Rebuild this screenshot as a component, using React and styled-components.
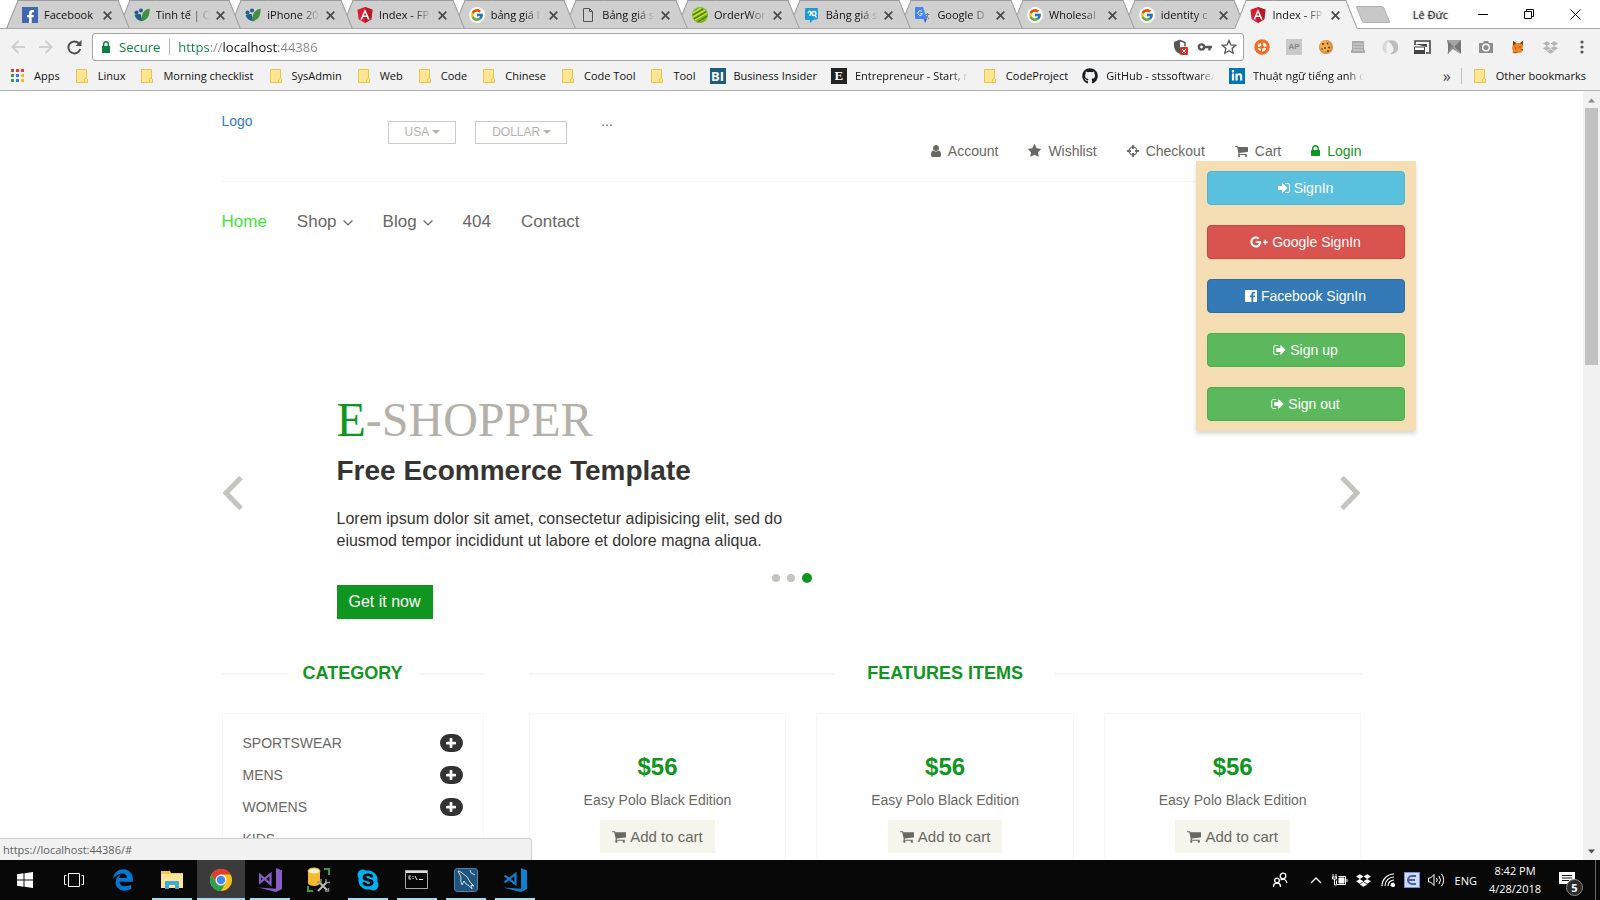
import React from "react";
import styled, { createGlobalStyle, css } from "styled-components";
import {
  FaDropbox,
  FaEdgeLegacy,
  FaFacebookF,
  FaGithub,
  FaGooglePlusG,
  FaLinkedinIn,
  FaSkype,
} from "react-icons/fa";
import { FcGoogle } from "react-icons/fc";

const ui = `"Open Sans", "Noto Sans", sans-serif`;
const arial = `"Liberation Sans", Arial, sans-serif`;
const green = "#0f9620";
const ink = "#696763";

const GlobalStyle = createGlobalStyle`
  *, *::before, *::after { box-sizing: border-box; }
  body { margin: 0; background: #fff; font-family: ${arial}; }
  button { margin: 0; padding: 0; border: 0; background: none; font: inherit; color: inherit; cursor: pointer; }
  a { color: inherit; text-decoration: none; }
  h1, h2, h3, p, ul { margin: 0; padding: 0; }
  ul { list-style: none; }
  svg { display: block; flex: none; }
`;

/* ---------- Browser window ---------- */

const Window = styled.div`
  display: flex;
  flex-direction: column;
  height: 100vh;
  overflow: hidden;
`;

const TabStrip = styled.div`
  display: flex;
  height: 28px;
  padding-left: 6px;
  background: #fff;
  font-family: ${ui};
  font-size: 11px;
`;

const Tabs = styled.div`
  display: flex;
  flex: 1;
  min-width: 0;
  position: relative;
  z-index: 1;
`;

const tabFace = css`
  content: "";
  position: absolute;
  top: 0;
  bottom: ${(p) => (p.$active ? "-1px" : "0")};
  z-index: -1;
  background: ${(p) => (p.$active ? "#f2f2f2" : "#cfcfcf")};
  border: 0 solid #9b9b9b;
  border-top-width: 1px;
`;

const Tab = styled.button`
  position: relative;
  isolation: isolate;
  z-index: ${(p) => p.$z};
  flex: 1;
  min-width: 0;
  display: flex;
  align-items: center;
  gap: 6px;
  padding: 2px 3px 0 16px;
  text-align: left;
  color: #111;

  &::before {
    ${tabFace}
    left: 6px;
    right: 40%;
    border-left-width: 1px;
    transform: skewX(-22deg);
  }
  &::after {
    ${tabFace}
    left: 40%;
    right: -6px;
    border-right-width: 1px;
    transform: skewX(22deg);
  }
`;

const TabTitle = styled.span`
  flex: 1;
  white-space: nowrap;
  line-height: 18px;
  ${(p) => p.$fade && "mask-image: linear-gradient(to right, #000 64%, transparent 100%);"}
`;

const TabClose = styled.span`
  width: 12px;
  display: flex;
`;

const WindowTools = styled.div`
  width: 254px;
  flex: none;
  display: flex;
  align-items: center;
  justify-content: flex-end;
  padding-right: 18px;
`;

const NewTab = styled.button`
  width: 28px;
  height: 17px;
  margin-right: auto;
  margin-left: 13px;
  border: 1px solid #b0b0b0;
  border-radius: 2px;
  background: #c8c8c8;
  transform: skewX(22deg);
`;

const Profile = styled.button`
  color: #333;
  margin-right: 28px;
  text-shadow: 0 0 2px #777;
`;

const WindowButton = styled.button`
  width: 14px;
  height: 20px;
  margin-left: ${(p) => (p.$gap ? "32px" : "0")};
  display: grid;
  place-items: center;
`;

const Toolbar = styled.div`
  display: flex;
  align-items: center;
  height: 35px;
  padding: 2px 10px 0 10px;
  background: #f2f2f2;
  border-top: 1px solid #a9a9a9;
  font-family: ${ui};
`;

const NavButton = styled.button`
  width: 16px;
  height: 28px;
  margin-right: 12px;
  display: grid;
  place-items: center;
`;

const Omnibox = styled.div`
  flex: 1;
  min-width: 0;
  height: 28px;
  margin-right: 10px;
  margin-left: -2px;
  display: flex;
  align-items: center;
  padding: 0 6px 0 9px;
  background: #fff;
  border: 1px solid #a6a6a6;
  border-radius: 3px;
  font-size: 13px;
`;

const Secure = styled.span`
  margin-left: 9px;
  padding-right: 9px;
  color: #0b8043;
  line-height: 16px;
  border-right: 1px solid #b5b5b5;
`;

const Address = styled.input`
  flex: 1;
  min-width: 0;
  height: 22px;
  padding: 0 0 0 8px;
  border: 0;
  outline: 0;
  font: 13px ${ui};
  color: #777;
  background: linear-gradient(to right, #0b8043 39px, #888 39px, #888 53px, #111 53px, #111 107px, #888 107px);
  background-clip: text;
  -webkit-text-fill-color: transparent;
`;

const OmniTools = styled.div`
  display: flex;
  gap: 8px;
`;

const Extensions = styled.div`
  display: flex;
  gap: 16px;
`;

const ToolButton = styled.button`
  width: 16px;
  height: 16px;
  display: grid;
  place-items: center;
`;

const ApBadge = styled.span`
  width: 16px;
  height: 16px;
  background: #c9c9c9;
  color: #888;
  font: bold 8px/16px ${arial};
`;

const BookmarkBar = styled.nav`
  display: flex;
  align-items: center;
  height: 28px;
  padding: 0 14px 2px 10px;
  background: #f2f2f2;
  border-bottom: 1px solid #b2b2b2;
  font-family: ${ui};
  font-size: 11px;
  color: #111;
`;

const Bookmark = styled.a`
  display: flex;
  align-items: center;
  gap: 8px;
  flex: none;
  margin-right: ${(p) => (p.$last ? 0 : 14)}px;
`;

const BookmarkText = styled.span`
  white-space: nowrap;
  line-height: 18px;
  ${(p) => p.$fade && "mask-image: linear-gradient(to right, #000 85%, transparent 100%);"}
`;

const BookmarkEnd = styled.div`
  display: flex;
  align-items: center;
  margin-left: auto;
  flex: none;
`;

const Overflow = styled.button`
  color: #444;
  font-size: 16px;
  line-height: 16px;
  padding-right: 10px;
  margin-right: 10px;
  border-right: 1px solid #c0c0c0;
`;

const LetterIcon = styled.span`
  width: 16px;
  height: 16px;
  flex: none;
  text-align: center;
  color: #fff;
  background: ${(p) => p.$bg};
  font: bold 13px/16px ${(p) => (p.$serif ? `"Liberation Serif", serif` : ui)};
`;

const IconTile = styled.span`
  width: 16px;
  height: 16px;
  flex: none;
  display: flex;
  align-items: ${(p) => (p.$low ? "flex-end" : "center")};
  justify-content: center;
  color: ${(p) => p.$fg || "#fff"};
  background: ${(p) => p.$bg || "transparent"};
  border-radius: ${(p) => (p.$round ? "50%" : "0")};
`;

/* ---------- Page frame ---------- */

const Viewport = styled.div`
  position: relative;
  flex: 1;
  min-height: 0;
  display: flex;
  overflow: hidden;
  background: #fff;
`;

const PageArea = styled.div`
  flex: 1;
  min-width: 0;
  overflow: hidden;
`;

const ScrollBar = styled.div`
  width: 17px;
  flex: none;
  display: flex;
  flex-direction: column;
  align-items: center;
  padding: 7px 0 6px;
  background: #f1f1f1;
`;

const ScrollThumb = styled.div`
  width: 13px;
  height: 34%;
  margin: 5px 0 auto;
  background: #c1c1c1;
`;

const StatusBubble = styled.div`
  position: absolute;
  left: 0;
  bottom: 0;
  width: 532px;
  height: 22px;
  padding-left: 3px;
  border: solid #cfcfcf;
  border-width: 1px 1px 0 0;
  border-radius: 0 4px 0 0;
  background: #f1f1f1;
  color: #5f5f5f;
  font: 11px/21px ${ui};
`;

/* ---------- Shop ---------- */

const Container = styled.div`
  max-width: 1140px;
  margin: 0 auto;
  color: ${ink};
  font-size: 14px;
  line-height: 20px;
`;

const ShopHeader = styled.header`
  display: flex;
  align-items: flex-start;
  height: 91px;
  padding-top: 20px;
  border-bottom: 1px solid #f5f5f5;
`;

const Logo = styled.a`
  width: 166px;
  color: #337ab7;
`;

const LocaleRow = styled.div`
  display: flex;
  gap: 19px;
  padding-top: 10px;
`;

const LocaleButton = styled.button`
  display: flex;
  align-items: center;
  gap: 3px;
  height: 23px;
  padding: 0 15px 2px 16px;
  border: 1px solid #ccccc6;
  color: #b4b1ab;
  font-size: 12px;
`;

const Caret = styled.span`
  border: 4px solid transparent;
  border-top-color: currentColor;
  border-bottom: 0;
`;

const Dots3 = styled.span`
  margin-left: 34px;
`;

const AccountNav = styled.ul`
  position: relative;
  display: flex;
  gap: 30px;
  margin-left: auto;
  padding-top: 30px;
`;

const AccountLink = styled.a`
  display: flex;
  align-items: center;
  gap: 7px;
  color: ${(p) => (p.$active ? green : ink)};
`;

const LoginMenu = styled.div`
  position: absolute;
  top: 50px;
  right: -54px;
  z-index: 2;
  width: 220px;
  padding: 10px 11px;
  display: flex;
  flex-direction: column;
  gap: 20px;
  background: #f5deb3;
  box-shadow: 0 3px 4px rgba(0, 0, 0, 0.15);
`;

const MenuButton = styled.button`
  display: flex;
  align-items: center;
  justify-content: center;
  gap: 4px;
  height: 34px;
  border: 1px solid ${(p) => p.$edge};
  border-radius: 4px;
  background: ${(p) => p.$bg};
  color: #fff;
`;

const MainNav = styled.nav`
  display: flex;
  gap: 30px;
  padding: 30px 0 19px;
  font-size: 17px;
`;

const MainLink = styled.a`
  display: flex;
  align-items: center;
  gap: 6px;
  color: ${(p) => (p.$active ? "#43e539" : ink)};
`;

const Carousel = styled.section`
  position: relative;
  display: flex;
  align-items: center;
  margin-top: 116px;
  height: 252px;
`;

const Arrow = styled.button`
  width: 22px;
  color: #c4c4be;
`;

const Caption = styled.div`
  flex: 1;
  align-self: flex-end;
  padding-left: 93px;
  color: #363432;
`;

const Brand = styled.h1`
  font: 48px/53px "Liberation Serif", "Times New Roman", serif;
  color: #b4b1ab;
`;

const BrandInitial = styled.span`
  color: ${green};
`;

const Tagline = styled.h2`
  margin-top: 10px;
  font-size: 28px;
  line-height: 30px;
`;

const Lead = styled.p`
  max-width: 460px;
  margin-top: 22px;
  font-size: 16px;
  line-height: 22px;
`;

const GetButton = styled.button`
  display: block;
  margin-top: 33px;
  height: 34px;
  padding: 0 12px;
  background: ${green};
  color: #fff;
  font-size: 16px;
`;

const Indicators = styled.div`
  position: absolute;
  left: 0;
  right: 0;
  bottom: 36px;
  display: flex;
  align-items: center;
  justify-content: center;
  gap: 7px;
  height: 10px;
`;

const Indicator = styled.button`
  width: ${(p) => (p.$active ? 10 : 8)}px;
  height: ${(p) => (p.$active ? 10 : 8)}px;
  border-radius: 50%;
  background: ${(p) => (p.$active ? green : "#c4c4be")};
`;

const Columns = styled.div`
  display: grid;
  grid-template-columns: 23% 1fr;
  column-gap: 45px;
  margin-top: 44px;
`;

const SectionTitle = styled.h2`
  display: flex;
  align-items: center;
  gap: ${(p) => (p.$wide ? 32 : 15)}px;
  margin-bottom: 30px;
  color: ${green};
  font-size: 18px;
  line-height: 20px;

  &::before,
  &::after {
    content: "";
    flex: 1;
    height: 2px;
    margin-top: 2px;
    background: #f5f5f5;
  }
`;

const CategoryPanel = styled.ul`
  padding: 13px 20px 20px;
  border: 1px solid #f7f7f5;
`;

const CategoryRow = styled.li`
  display: flex;
  align-items: center;
  justify-content: space-between;
  height: 32px;
`;

const ExpandButton = styled.button`
  display: grid;
  place-items: center;
  width: 23px;
  height: 18px;
  border-radius: 10px;
  background: #333;
  color: #fff;
`;

const ProductGrid = styled.div`
  display: grid;
  grid-template-columns: repeat(3, 1fr);
  column-gap: 30px;
`;

const ProductCard = styled.article`
  display: flex;
  flex-direction: column;
  align-items: center;
  padding: 40px 0;
  border: 1px solid #f7f7f5;
`;

const Price = styled.h3`
  color: ${green};
  font-size: 24px;
  line-height: 26px;
`;

const ProductName = styled.p`
  margin: 10px 0;
`;

const CartButton = styled.button`
  display: flex;
  align-items: center;
  gap: 4px;
  height: 33px;
  padding: 0 12px;
  background: #f5f5ed;
  font-size: 15px;
`;

/* ---------- Taskbar ---------- */

const Taskbar = styled.footer`
  display: flex;
  align-items: stretch;
  height: 40px;
  flex: none;
  background: #080808;
  color: #fff;
  font-family: ${ui};
  font-size: 11px;
`;

const Apps = styled.div`
  display: flex;
  gap: 1px;
  padding-left: 1px;
`;

const AppButton = styled.button`
  position: relative;
  width: 48px;
  display: grid;
  place-items: center;
  background: ${(p) => (p.$active ? "#3b3b3b" : "transparent")};

  &::after {
    content: "";
    position: absolute;
    bottom: 0;
    left: ${(p) => (p.$active ? 0 : 4)}px;
    right: ${(p) => (p.$active ? 0 : 4)}px;
    height: 2px;
    background: ${(p) => (p.$running ? "#a4dcf4" : "transparent")};
  }
`;

const Tray = styled.div`
  display: flex;
  align-items: center;
  gap: 8px;
  margin-left: auto;
  padding-right: 4px;
`;

const TrayButton = styled.button`
  width: 16px;
  height: 24px;
  display: grid;
  place-items: center;
  margin-right: ${(p) => p.$after || 0}px;
`;

const Clock = styled.time`
  width: 60px;
  text-align: center;
  line-height: 18px;
`;

const Notifications = styled.button`
  position: relative;
  width: 28px;
  height: 40px;
  margin-left: 4px;
  margin-right: 2px;
`;

const NotificationIcon = styled.span`
  position: absolute;
  left: 2px;
  top: 12px;
`;

const NotificationCount = styled.span`
  position: absolute;
  left: 9px;
  top: 19px;
  width: 17px;
  height: 17px;
  border: 1px solid #8a8a8a;
  border-radius: 50%;
  background: #2b2b2b;
  font-weight: bold;
  line-height: 15px;
`;

const ShowDesktop = styled.span`
  width: 1px;
  height: 40px;
  background: #6a6a6a;
`;

/* ---------- Icons ---------- */

const glyphs = {
  user: [256, 1280, "M1536 1399q0 109-62.5 187t-150.5 78h-854q-88 0-150.5-78t-62.5-187q0-85 8.5-160.5t31.5-152 58.5-131 94-89 134.5-34.5q131 128 313 128t313-128q76 0 134.5 34.5t94 89 58.5 131 31.5 152 8.5 160.5zm-256-887q0 159-112.5 271.5t-271.5 112.5-271.5-112.5-112.5-271.5 112.5-271.5 271.5-112.5 271.5 112.5 112.5 271.5z"],
  star: [64, 1664, "M1728 647q0 22-26 48l-363 354 86 500q1 7 1 20 0 21-10.5 35.5t-30.5 14.5q-19 0-40-12l-449-236-449 236q-22 12-40 12-21 0-31.5-14.5t-10.5-35.5q0-6 2-20l86-500-364-354q-25-27-25-48 0-37 56-46l502-73 225-455q19-41 49-41t49 41l225 455 502 73q56 9 56 46z"],
  crosshairs: [128, 1536, "M1325 1024h-109q-26 0-45-19t-19-45v-128q0-26 19-45t45-19h109q-32-108-112.5-188.5t-188.5-112.5v109q0 26-19 45t-45 19h-128q-26 0-45-19t-19-45v-109q-108 32-188.5 112.5t-112.5 188.5h109q26 0 45 19t19 45v128q0 26-19 45t-45 19h-109q32 108 112.5 188.5t188.5 112.5v-109q0-26 19-45t45-19h128q26 0 45 19t19 45v109q108-32 188.5-112.5t112.5-188.5zm339-192v128q0 26-19 45t-45 19h-143q-37 161-154.5 278.5t-278.5 154.5v143q0 26-19 45t-45 19h-128q-26 0-45-19t-19-45v-143q-161-37-278.5-154.5t-154.5-278.5h-143q-26 0-45-19t-19-45v-128q0-26 19-45t45-19h143q37-161 154.5-278.5t278.5-154.5v-143q0-26 19-45t45-19h128q26 0 45 19t19 45v143q161 37 278.5 154.5t154.5 278.5h143q26 0 45 19t19 45z"],
  cart: [64, 1664, "M704 1536q0 52-38 90t-90 38-90-38-38-90 38-90 90-38 90 38 38 90zm896 0q0 52-38 90t-90 38-90-38-38-90 38-90 90-38 90 38 38 90zm128-1088v512q0 24-16.5 42.5t-40.5 21.5l-1044 122q13 60 13 70 0 16-24 64h920q26 0 45 19t19 45-19 45-45 19h-1024q-26 0-45-19t-19-45q0-11 8-31.5t16-36 21.5-40 15.5-29.5l-177-823h-204q-26 0-45-19t-19-45 19-45 45-19h256q16 0 28.5 6.5t19.5 15.5 13 24.5 8 26 5.5 29.5 4.5 26h1201q26 0 45 19t19 45z"],
  lock: [320, 1152, "M640 768h512v-192q0-106-75-181t-181-75-181 75-75 181v192zm832 96v576q0 40-28 68t-68 28h-960q-40 0-68-28t-28-68v-576q0-40 28-68t68-28h32v-192q0-184 132-316t316-132 316 132 132 316v192h32q40 0 68 28t28 68z"],
  signIn: [128, 1536, "M1312 896q0 26-19 45l-544 544q-19 19-45 19t-45-19-19-45v-288h-448q-26 0-45-19t-19-45v-384q0-26 19-45t45-19h448v-288q0-26 19-45t45-19 45 19l544 544q19 19 19 45zm352-352v704q0 119-84.5 203.5t-203.5 84.5h-320q-13 0-22.5-9.5t-9.5-22.5q0-4-1-20t-.5-26.5 3-23.5 10-19.5 20.5-6.5h320q66 0 113-47t47-113v-704q0-66-47-113t-113-47h-312l-11.5-1-11.5-3-8-5.5-7-9-2-13.5q0-4-1-20t-.5-26.5 3-23.5 10-19.5 20.5-6.5h320q119 0 203.5 84.5t84.5 203.5z"],
  signOut: [64, 1600, "M704 1440q0 4 1 20t.5 26.5-3 23.5-10 19.5-20.5 6.5h-320q-119 0-203.5-84.5t-84.5-203.5v-704q0-119 84.5-203.5t203.5-84.5h320q13 0 22.5 9.5t9.5 22.5q0 4 1 20t.5 26.5-3 23.5-10 19.5-20.5 6.5h-320q-66 0-113 47t-47 113v704q0 66 47 113t113 47h312l11.5 1 11.5 3 8 5.5 7 9 2 13.5zm928-544q0 26-19 45l-544 544q-19 19-45 19t-45-19-19-45v-288h-448q-26 0-45-19t-19-45v-384q0-26 19-45t45-19h448v-288q0-26 19-45t45-19 45 19l544 544q19 19 19 45z"],
  facebook: [128, 1536, "M1579 128q35 0 60 25t25 60v1366q0 35-25 60t-60 25h-391v-595h199l30-232h-229v-148q0-56 23.5-84t91.5-28l122-1v-207q-63-9-178-9-136 0-217.5 80t-81.5 226v171h-200v232h200v595h-735q-35 0-60-25t-25-60v-1366q0-35 25-60t60-25h1366z"],
  plus: [192, 1408, "M1600 736v192q0 40-28 68t-68 28h-416v416q0 40-28 68t-68 28h-192q-40 0-68-28t-28-68v-416h-416q-40 0-68-28t-28-68v-192q0-40 28-68t68-28h416v-416q0-40 28-68t68-28h192q40 0 68 28t28 68v416h416q40 0 68 28t28 68z"],
  angleDown: [384, 1024, "M1395 736q0 13-10 23l-466 466q-10 10-23 10t-23-10l-466-466q-10-10-10-23t10-23l50-50q10-10 23-10t23 10l393 393 393-393q10-10 23-10t23 10l50 50q10 10 10 23z"],
};

function Glyph({ name, size = 14 }) {
  const [x, w, d] = glyphs[name];
  return (
    <svg width={Math.round((w * size) / 1792)} height={size} viewBox={`${x} 0 ${w} 1792`} fill="currentColor" aria-hidden="true">
      <path d={d} />
    </svg>
  );
}

const FolderIcon = () => (
  <svg width="16" height="16" viewBox="0 0 16 16">
    <path d="M2.5 1.500h10v9l1 1v3h-11z" fill="#ffe694" stroke="#e8c548" />
    <path d="M10.500 14.500v-3l1.500-1.500 1.500 1.500v3z" fill="#ffe694" stroke="#e8c548" />
  </svg>
);

const AppsIcon = () => (
  <svg width="16" height="16" viewBox="0 0 16 16">
    {["#e53935", "#e53935", "#e53935", "#2e9e4f", "#2b7de9", "#f9b31b", "#2e9e4f", "#2b7de9", "#f9b31b"].map((c, i) => (
      <rect key={i} x={1 + (i % 3) * 5} y={1 + Math.floor(i / 3) * 5} width="3" height="3" fill={c} />
    ))}
  </svg>
);

const Leaf = () => (
  <svg width="16" height="16" viewBox="0 0 16 16">
    <circle cx="2.500" cy="5.500" r="2" fill="#1f5f8b" />
    <circle cx="7" cy="3.500" r="2" fill="#1f5f8b" />
    <path d="M.5 8q3-1.500 6-1l2 7q-6 0-8-6z" fill="#1f5f8b" />
    <path d="M15.500 1.500q1 11-8 13q-1-11 8-13z" fill="#3f9142" />
  </svg>
);

const AngularIcon = () => (
  <svg width="16" height="16" viewBox="0 0 16 16">
    <path d="M8 0l7.500 2.700-1.200 9.600L8 16l-6.300-3.700L.5 2.700z" fill="#dd1b2f" />
    <path d="M8 0l7.500 2.700-1.200 9.600L8 16z" fill="#b91626" />
    <path d="M8 2L3.300 12.500h1.900l1-2.400h3.600l1 2.400h1.900zM8 5.500l1.300 3H6.700z" fill="#fff" fillRule="evenodd" />
  </svg>
);

const PageIcon = () => (
  <svg width="16" height="16" viewBox="0 0 16 16" fill="none" stroke="#555">
    <path d="M3.500 1.500h6l3 3v10h-9zM9.500 1.500v3h3" />
  </svg>
);

const OrderIcon = () => (
  <svg width="16" height="16" viewBox="0 0 16 16">
    <circle cx="8" cy="8" r="8" fill="#7fb51c" />
    <path d="M1 6L9 1M1 10L13 3M3 13L15 6" stroke="#cfe64a" strokeWidth="1.300" />
    <path d="M1 8L11 2M2 12L14 5M6 15l9-6" stroke="#4f7d0d" strokeWidth="1.300" />
  </svg>
);

const ChatIcon = () => (
  <svg width="16" height="16" viewBox="0 0 16 16">
    <path d="M2 1h11q1 0 1 1v10l-5 1-3 3v-3h-4q-1 0-1-1v-10q0-1 1-1z" fill="#1a9bd7" />
    <path d="M4 6q1.500-3 3-1 1 1-1 2.500v1.500" stroke="#fff" strokeWidth="1.400" fill="none" />
    <circle cx="10" cy="6.500" r="2" stroke="#fff" strokeWidth="1.300" fill="none" />
    <path d="M11 8.500l1.500 2" stroke="#fff" strokeWidth="1.300" />
  </svg>
);

const TranslateIcon = () => (
  <svg width="16" height="16" viewBox="0 0 16 16">
    <path d="M6 4h9q1 0 1 1v9q0 1-1 1h-6z" fill="#d3d3d3" />
    <path d="M1 0h7l4 12h-11q-1 0-1-1v-10q0-1 1-1z" fill="#4285f4" />
    <path d="M9 12h3l-2 4z" fill="#2559c0" />
    <path d="M7 4.500a2.300 2.300 0 1 0 .5 2h-2" stroke="#fff" fill="none" />
    <path d="M10.500 7.500h4M12.500 6v1.500q0 3-2 4M11.500 9l2.500 3" stroke="#67799a" fill="none" />
  </svg>
);

const CloseIcon = () => (
  <svg width="9" height="9" viewBox="0 0 9 9" stroke="#4a4a4a" strokeWidth="1.700">
    <path d="M.7.7l7.600 7.600M8.300.7L.7 8.300" />
  </svg>
);

const FacebookTile = () => (
  <IconTile $bg="#4267b2" $low>
    <FaFacebookF size={13} />
  </IconTile>
);
const GoogleTile = () => (
  <IconTile $bg="#fff" $round>
    <FcGoogle size={14} />
  </IconTile>
);

const ShieldIcon = () => (
  <svg width="16" height="16" viewBox="0 0 16 16">
    <path d="M7 0.500L1 3v4q0 5 6 8z" fill="#555" />
    <path d="M7 1.500l5 2v4" fill="none" stroke="#555" strokeWidth="1.500" />
    <rect x="7" y="8" width="8" height="8" rx="1" fill="#d93025" />
    <path d="M9 10l4 4M13 10l-4 4" stroke="#fff" />
  </svg>
);

const KeyIcon = () => (
  <svg width="16" height="16" viewBox="0 0 16 16" fill="none" stroke="#555" strokeWidth="2.400">
    <circle cx="4.500" cy="8" r="2.600" />
    <path d="M7 8h8M12.500 8v3.500" />
  </svg>
);

const StarOutline = () => (
  <svg width="16" height="16" viewBox="0 0 16 16" fill="none" stroke="#555" strokeWidth="1.300">
    <path d="M8 1.500l1.900 4.400 4.800.4-3.600 3.200 1.100 4.700L8 11.700l-4.200 2.500 1.100-4.700L1.300 6.300l4.800-.4z" />
  </svg>
);

const extensionIcons = {
  "Orange ring": (
    <svg width="16" height="16" viewBox="0 0 16 16">
      <circle cx="8" cy="8" r="7.700" fill="#f36c21" />
      <path d="M3.500 7.500a4.500 4.500 0 0 1 3-3.800l1 2.500-2 1.800zM9.500 3.500a4.500 4.500 0 0 1 3.200 4l-2.500.3-1.500-2zM12.300 9.500a4.500 4.500 0 0 1-4.300 3l.3-2.700 2-1zM6.500 12.300a4.500 4.500 0 0 1-2.800-3l2.300-.3 1 1.500z" fill="#fff" />
    </svg>
  ),
  AP: <ApBadge>AP</ApBadge>,
  Cookies: (
    <svg width="16" height="16" viewBox="0 0 16 16">
      <circle cx="8" cy="8" r="7" fill="#dc8f35" />
      <circle cx="7" cy="7" r="5.500" fill="#f0ad4e" />
      <g fill="#6b3710">
        <circle cx="5" cy="5" r="1" />
        <circle cx="9.500" cy="4.500" r="1" />
        <circle cx="7" cy="9" r="1" />
        <circle cx="11" cy="8.500" r="1" />
        <circle cx="4" cy="10" r=".8" />
        <circle cx="10" cy="12" r="1" />
      </g>
    </svg>
  ),
  Notes: (
    <svg width="16" height="16" viewBox="0 0 16 16">
      <path d="M2 2h12v9h1v3h-14v-3h1z" fill="#aaa" />
      <path d="M3 5h10M3 8h10M3 11h10" stroke="#d8d8d8" />
    </svg>
  ),
  Swirl: (
    <svg width="16" height="16" viewBox="0 0 16 16">
      <path d="M7 1a7 7 0 0 0-2 13.500q-2.500-8 2-13.500z" fill="#d8d8d8" />
      <path d="M6 2a7 7 0 1 1 2 13q5-3 3-7T6 2z" fill="#bdbdbd" />
    </svg>
  ),
  Windows: (
    <svg width="17" height="16" viewBox="0 0 17 16">
      <path d="M1 6v-4h15v12h-4" fill="none" stroke="#444" strokeWidth="1.600" />
      <path d="M.5 8h10v6h-10z" fill="#fff" stroke="#444" />
      <path d="M0 11h11v4H0zM1 5h12v3" fill="#444" />
    </svg>
  ),
  Blocker: (
    <svg width="16" height="16" viewBox="0 0 16 16">
      <path d="M1 1h14v14L8 8l-6 7V6z" fill="#777" />
      <path d="M1 1h14L8 8z" fill="#a5a5a5" />
      <path d="M5 8l-4 7 6-5 7 5-7-8z" fill="#8f8f8f" />
    </svg>
  ),
  Camera: (
    <svg width="16" height="16" viewBox="0 0 16 16">
      <path d="M1 4h4l1-2h4l1 2h4v10h-14z" fill="#8d8d8d" />
      <circle cx="8" cy="8.500" r="3.300" fill="none" stroke="#fff" strokeWidth="1.500" />
    </svg>
  ),
  Fox: (
    <svg width="16" height="16" viewBox="0 0 16 16">
      <path d="M3 2l3 2h4l3-2v5l-1 6-4 1-5-1-1-4 1-3z" fill="#f08322" />
      <path d="M3 2l3 2-3 3zM10 4l3-2v4zM4.500 8l2 1-1 1zM9 7.500h2l-1 1.500z" fill="#6b3710" />
      <path d="M2 13h6l-3 1.500zM10 10h3v2z" fill="#a4571a" />
    </svg>
  ),
  Dropbox: <FaDropbox size={15} color="#b5b5b5" />,
};

const ChromeIcon = () => (
  <svg width="24" height="24" viewBox="0 0 24 24">
    <circle cx="12" cy="12" r="11" fill="#fbc116" />
    <path d="M2.470 6.500A11 11 0 0 1 21.530 6.500H12L7.240 14.750z" fill="#e33b2e" />
    <path d="M2.470 6.500A11 11 0 0 0 12 23L16.760 14.750H7.240z" fill="#2ba24c" />
    <circle cx="12" cy="12" r="5.500" fill="#fff" />
    <circle cx="12" cy="12" r="4.200" fill="#4688f1" />
  </svg>
);

const StudioIcon = ({ color, open }) => (
  <svg width="24" height="24" viewBox="0 0 24 24">
    <path d="M18 0l6 2.500v18.500l-6 3L0 19.500l18 1.200z" fill={color} />
    <path
      d={open ? "M1.500 7.500L12.500 16V6L1.500 14.500" : "M2 7v7.500L12.500 6v10L2 7z"}
      fill="none"
      stroke={color}
      strokeWidth="2.200"
    />
  </svg>
);

const apps = [
  ["Start", "", (
    <svg width="16" height="16" viewBox="0 0 16 16" fill="#fff">
      <path d="M0 2.200l6.500-.9v6.200H0zM7.500 1.200L16 0v7.500H7.500zM0 8.500h6.500v6.200L0 13.800zM7.500 8.500H16V16l-8.500-1.200z" />
    </svg>
  )],
  ["Task view", "", (
    <svg width="20" height="14" viewBox="0 0 20 14" fill="none" stroke="#fff">
      <path d="M4.500.5h11v13h-11zM2.500 2.500h-2v9h2M17.500 2.500h2v9h-2" />
    </svg>
  )],
  ["Edge", "", <FaEdgeLegacy size={22} color="#0078d7" />],
  ["File Explorer", "running", (
    <svg width="22" height="20" viewBox="0 0 22 20">
      <path d="M0 1h9l1 2h12v15H0z" fill="#f5c84c" />
      <path d="M0 4h22v14H0z" fill="#ffe694" />
      <path d="M4 19v-8h14v8h-4v-4H8v4z" fill="#3fa9dc" />
    </svg>
  )],
  ["Chrome", "active", <ChromeIcon />],
  ["Visual Studio", "running", <StudioIcon color="#865fc5" />],
  ["SQL Server Management Studio", "", (
    <svg width="24" height="26" viewBox="0 0 24 26">
      <path d="M1 4v12a6 3 0 0 0 12 0V4z" fill="#f5b82e" />
      <ellipse cx="7" cy="4" rx="6" ry="3" fill="#fff3c8" stroke="#f5b82e" />
      <path d="M17 2h5v6M1 19v5h5" fill="none" stroke="#3b9a3b" strokeWidth="2" />
      <path d="M12 15l8 8M20 15l-9 9" stroke="#b9b9b9" strokeWidth="2" />
      <path d="M19 12v3.500h4M10 15h4v-3M18 24h3.500v-3" stroke="#8f8f8f" strokeWidth="1.500" fill="none" />
    </svg>
  )],
  ["Skype", "running", (
    <IconTile $fg="#00aff0"><FaSkype size={24} /></IconTile>
  )],
  ["Command Prompt", "running", (
    <svg width="24" height="20" viewBox="0 0 24 20">
      <path d="M.5.5h22v18H.5z" fill="#050505" stroke="#a8a8a8" />
      <path d="M1 1h21v2H1z" fill="#dcdcdc" />
      <path d="M6 6H4v3h2M8 6v1M8 8v1M10 6l2 4M14 9.500h4" stroke="#eee" fill="none" />
    </svg>
  )],
  ["MySQL Workbench", "running", (
    <svg width="24" height="24" viewBox="0 0 24 24">
      <rect x=".5" y=".5" width="23" height="23" rx="3" fill="#20547f" stroke="#4f87ad" />
      <path d="M4 3q2 0 4 2 6 3 8 9l4 4-3-1 1 4q-3-4-6-5l-2-3-2 4q-2-4-1-8z" fill="none" stroke="#c9dce8" />
      <path d="M16 2l1 3 4 2" stroke="#c9dce8" fill="none" />
    </svg>
  )],
  ["Visual Studio Code", "running", <StudioIcon color="#1081d0" open />],
];

const tabs = [
  ["Facebook", FacebookTile],
  ["Tinh tế | C", Leaf],
  ["iPhone 20", Leaf],
  ["Index - FP", AngularIcon],
  ["bảng giá l", GoogleTile],
  ["Bảng giá s", PageIcon],
  ["OrderWor", OrderIcon],
  ["Bảng giá s", ChatIcon],
  ["Google D", TranslateIcon],
  ["Wholesal", GoogleTile],
  ["identity c", GoogleTile],
  ["Index - FP", AngularIcon],
];

const bookmarks = [
  ["Apps", <AppsIcon />],
  ["Linux"],
  ["Morning checklist"],
  ["SysAdmin"],
  ["Web"],
  ["Code"],
  ["Chinese"],
  ["Code Tool"],
  ["Tool"],
  ["Business Insider", <LetterIcon $bg="#1d5c7d">BI</LetterIcon>],
  ["Entrepreneur - Start, r", <LetterIcon $bg="#222" $serif>E</LetterIcon>, true],
  ["CodeProject"],
  ["GitHub - stssoftware/", <IconTile $fg="#1b1f23"><FaGithub size={16} /></IconTile>, true],
  ["Thuật ngữ tiếng anh c", <IconTile $bg="#0077b5"><FaLinkedinIn size={12} /></IconTile>, true],
];

const loginActions = [
  ["SignIn", <Glyph name="signIn" />, "#5bc0de", "#46b8da"],
  ["Google SignIn", <FaGooglePlusG size={18} />, "#d9534f", "#d43f3a"],
  ["Facebook SignIn", <Glyph name="facebook" />, "#337ab7", "#2e6da4"],
  ["Sign up", <Glyph name="signOut" />, "#5cb85c", "#4cae4c"],
  ["Sign out", <Glyph name="signOut" />, "#5cb85c", "#4cae4c"],
];

function BrowserChrome() {
  return (
    <>
      <TabStrip>
        <Tabs role="tablist">
          {tabs.map(([title, Icon], i) => {
            const active = i === tabs.length - 1;
            return (
              <Tab key={i} role="tab" aria-selected={active} $active={active} $z={active ? 20 : 15 - i}>
                <Icon />
                <TabTitle $fade={i > 0}>{title}</TabTitle>
                <TabClose><CloseIcon /></TabClose>
              </Tab>
            );
          })}
        </Tabs>
        <WindowTools>
          <NewTab aria-label="New tab" />
          <Profile>Lê Đức</Profile>
          <WindowButton aria-label="Minimize">
            <svg width="10" height="10" stroke="#000"><path d="M0 5.500h10" /></svg>
          </WindowButton>
          <WindowButton $gap aria-label="Restore">
            <svg width="10" height="10" fill="none" stroke="#000"><path d="M.5 2.500h7v7h-7zM2.500 2.500v-2h7v7h-2" /></svg>
          </WindowButton>
          <WindowButton $gap aria-label="Close">
            <svg width="11" height="11" stroke="#000"><path d="M.5.5l10 10M10.500.5l-10 10" /></svg>
          </WindowButton>
        </WindowTools>
      </TabStrip>
      <Toolbar>
        <NavButton aria-label="Back">
          <svg width="14" height="14" fill="none" stroke="#cfcfcf" strokeWidth="2"><path d="M14 7H1.500M7.500 1l-6 6 6 6" /></svg>
        </NavButton>
        <NavButton aria-label="Forward">
          <svg width="14" height="14" fill="none" stroke="#cfcfcf" strokeWidth="2"><path d="M0 7h12.500M6.500 1l6 6-6 6" /></svg>
        </NavButton>
        <NavButton aria-label="Reload">
          <svg width="15" height="15" fill="none" stroke="#505050" strokeWidth="2">
            <path d="M12 3.500A6 6 0 1 0 13.200 9" />
            <path d="M14.500 0v6h-6z" fill="#505050" stroke="none" />
          </svg>
        </NavButton>
        <Omnibox>
          <svg width="8" height="12" viewBox="0 0 8 12">
            <path d="M0 5h8v7H0z" fill="#0b8043" />
            <path d="M1.700 5V3a2.300 2.300 0 0 1 4.600 0v2" fill="none" stroke="#0b8043" strokeWidth="1.400" />
          </svg>
          <Secure>Secure</Secure>
          <Address aria-label="Address" defaultValue="https://localhost:44386" spellCheck={false} />
          <OmniTools>
            <ToolButton aria-label="Insecure content blocked"><ShieldIcon /></ToolButton>
            <ToolButton aria-label="Saved passwords"><KeyIcon /></ToolButton>
            <ToolButton aria-label="Bookmark this page"><StarOutline /></ToolButton>
          </OmniTools>
        </Omnibox>
        <Extensions>
          {Object.entries(extensionIcons).map(([name, icon]) => (
            <ToolButton key={name} aria-label={name}>{icon}</ToolButton>
          ))}
          <ToolButton aria-label="Menu">
            <svg width="4" height="16" fill="#555"><circle cx="2" cy="3" r="1.600" /><circle cx="2" cy="8" r="1.600" /><circle cx="2" cy="13" r="1.600" /></svg>
          </ToolButton>
        </Extensions>
      </Toolbar>
      <BookmarkBar>
        {bookmarks.map(([name, icon, fade]) => (
          <Bookmark key={name} href="#">
            {icon || <FolderIcon />}
            <BookmarkText $fade={fade}>{name}</BookmarkText>
          </Bookmark>
        ))}
        <BookmarkEnd>
          <Overflow aria-label="More bookmarks">»</Overflow>
          <Bookmark href="#" $last>
            <FolderIcon />
            <BookmarkText>Other bookmarks</BookmarkText>
          </Bookmark>
        </BookmarkEnd>
      </BookmarkBar>
    </>
  );
}

function Shop() {
  return (
    <Container>
      <ShopHeader>
        <Logo href="#">Logo</Logo>
        <LocaleRow>
          <LocaleButton>USA <Caret /></LocaleButton>
          <LocaleButton>DOLLAR <Caret /></LocaleButton>
        </LocaleRow>
        <Dots3>...</Dots3>
        <AccountNav>
          {[["Account", "user"], ["Wishlist", "star"], ["Checkout", "crosshairs"], ["Cart", "cart"], ["Login", "lock"]].map(([label, icon]) => (
            <li key={label}>
              <AccountLink href="#" $active={label === "Login"}>
                <Glyph name={icon} />
                {label}
              </AccountLink>
              {label === "Login" && (
                <LoginMenu>
                  {loginActions.map(([text, glyph, bg, edge]) => (
                    <MenuButton key={text} $bg={bg} $edge={edge}>{glyph}{text}</MenuButton>
                  ))}
                </LoginMenu>
              )}
            </li>
          ))}
        </AccountNav>
      </ShopHeader>
      <MainNav>
        <MainLink href="#" $active>Home</MainLink>
        <MainLink href="#">Shop <Glyph name="angleDown" size={17} /></MainLink>
        <MainLink href="#">Blog <Glyph name="angleDown" size={17} /></MainLink>
        <MainLink href="#">404</MainLink>
        <MainLink href="#">Contact</MainLink>
      </MainNav>
      <Carousel>
        <Arrow aria-label="Previous">
          <svg width="22" height="36" fill="none" stroke="currentColor" strokeWidth="5"><path d="M19 2.500L4 18l15 15.500" /></svg>
        </Arrow>
        <Caption>
          <Brand><BrandInitial>E</BrandInitial>-SHOPPER</Brand>
          <Tagline>Free Ecommerce Template</Tagline>
          <Lead>Lorem ipsum dolor sit amet, consectetur adipisicing elit, sed do eiusmod tempor incididunt ut labore et dolore magna aliqua.</Lead>
          <GetButton>Get it now</GetButton>
        </Caption>
        <Arrow aria-label="Next">
          <svg width="22" height="36" fill="none" stroke="currentColor" strokeWidth="5"><path d="M2 2.500L17 18 2 33.500" /></svg>
        </Arrow>
        <Indicators>
          <Indicator aria-label="Slide 1" />
          <Indicator aria-label="Slide 2" />
          <Indicator aria-label="Slide 3" $active />
        </Indicators>
      </Carousel>
      <Columns>
        <section>
          <SectionTitle>CATEGORY</SectionTitle>
          <CategoryPanel>
            {["SPORTSWEAR", "MENS", "WOMENS", "KIDS"].map((name) => (
              <CategoryRow key={name}>
                <a href="#">{name}</a>
                {name !== "KIDS" && (
                  <ExpandButton aria-label={`Expand ${name}`}><Glyph name="plus" size={13} /></ExpandButton>
                )}
              </CategoryRow>
            ))}
          </CategoryPanel>
        </section>
        <section>
          <SectionTitle $wide>FEATURES ITEMS</SectionTitle>
          <ProductGrid>
            {[1, 2, 3].map((id) => (
              <ProductCard key={id}>
                <Price>$56</Price>
                <ProductName>Easy Polo Black Edition</ProductName>
                <CartButton><Glyph name="cart" size={15} />Add to cart</CartButton>
              </ProductCard>
            ))}
          </ProductGrid>
        </section>
      </Columns>
    </Container>
  );
}

function WindowsTaskbar() {
  return (
    <Taskbar>
      <Apps>
        {apps.map(([name, state, icon]) => (
          <AppButton key={name} aria-label={name} $active={state === "active"} $running={state !== ""}>{icon}</AppButton>
        ))}
      </Apps>
      <Tray>
        <TrayButton $after={12} aria-label="People">
          <svg width="16" height="16" fill="none" stroke="#fff" strokeWidth="1.300">
            <circle cx="11" cy="4" r="2.800" /><circle cx="5" cy="8.500" r="2.300" />
            <path d="M1.500 15q0-4 3.500-4t3.500 4M8.500 8q5-2.500 6.500 3" />
          </svg>
        </TrayButton>
        <TrayButton aria-label="Show hidden icons">
          <svg width="12" height="8" fill="none" stroke="#fff" strokeWidth="1.300"><path d="M1 7l5-5 5 5" /></svg>
        </TrayButton>
        <TrayButton aria-label="Battery">
          <svg width="16" height="12" fill="none" stroke="#fff">
            <path d="M4.500 6.500v4h9v-8h-7M15 5v3" /><path d="M7 4h5v5H7z" fill="#fff" /><path d="M1 0v3M4 0v3M.5 3v2h4v-2zM2.500 5v6h2" />
          </svg>
        </TrayButton>
        <TrayButton aria-label="Dropbox"><FaDropbox size={15} /></TrayButton>
        <TrayButton aria-label="Wi-Fi">
          <svg width="14" height="14" fill="none" stroke="#fff" strokeWidth="1.200">
            <path d="M1 13A12 12 0 0 1 13 1M4 13a9 9 0 0 1 9-9M7 13a6 6 0 0 1 6-6" /><circle cx="12" cy="12" r="1.500" fill="#fff" />
            <path d="M10 13a3 3 0 0 1 3-3" />
          </svg>
        </TrayButton>
        <TrayButton aria-label="Unikey">
          <svg width="16" height="16">
            <rect x=".5" y=".5" width="15" height="15" fill="#cfdcfa" stroke="#6f93e0" />
            <path d="M12 4H8a4 4 0 0 0 0 8h4M4 8h7" fill="none" stroke="#4c5fa8" strokeWidth="2" />
          </svg>
        </TrayButton>
        <TrayButton $after={3} aria-label="Volume">
          <svg width="17" height="14" fill="none" stroke="#fff">
            <path d="M.5 5v4h2l3.500 3.500v-11L2.500 5zM8.500 5q1.500 2 0 4M11 3q3 4 0 8M13.500 1q4.500 6 0 12" />
          </svg>
        </TrayButton>
        <button aria-label="Input language">ENG</button>
        <Clock>8:42 PM<br />4/28/2018</Clock>
        <Notifications aria-label="5 notifications">
          <NotificationIcon>
            <svg width="16" height="16">
              <path d="M0 0h16v12h-4l-4 4v-4H0z" fill="#fff" />
              <path d="M3 3.500h10M3 6h10M3 8.500h7" stroke="#111" />
            </svg>
          </NotificationIcon>
          <NotificationCount>5</NotificationCount>
        </Notifications>
        <ShowDesktop />
      </Tray>
    </Taskbar>
  );
}

export default function App() {
  return (
    <Window>
      <GlobalStyle />
      <BrowserChrome />
      <Viewport>
        <PageArea><Shop /></PageArea>
        <ScrollBar>
          <svg width="7" height="5"><path d="M0 4.500L3.500.5 7 4.500z" fill="#8a8a8a" /></svg>
          <ScrollThumb />
          <svg width="7" height="5"><path d="M0 .5h7L3.500 4.500z" fill="#505050" /></svg>
        </ScrollBar>
        <StatusBubble>https://localhost:44386/#</StatusBubble>
      </Viewport>
      <WindowsTaskbar />
    </Window>
  );
}
